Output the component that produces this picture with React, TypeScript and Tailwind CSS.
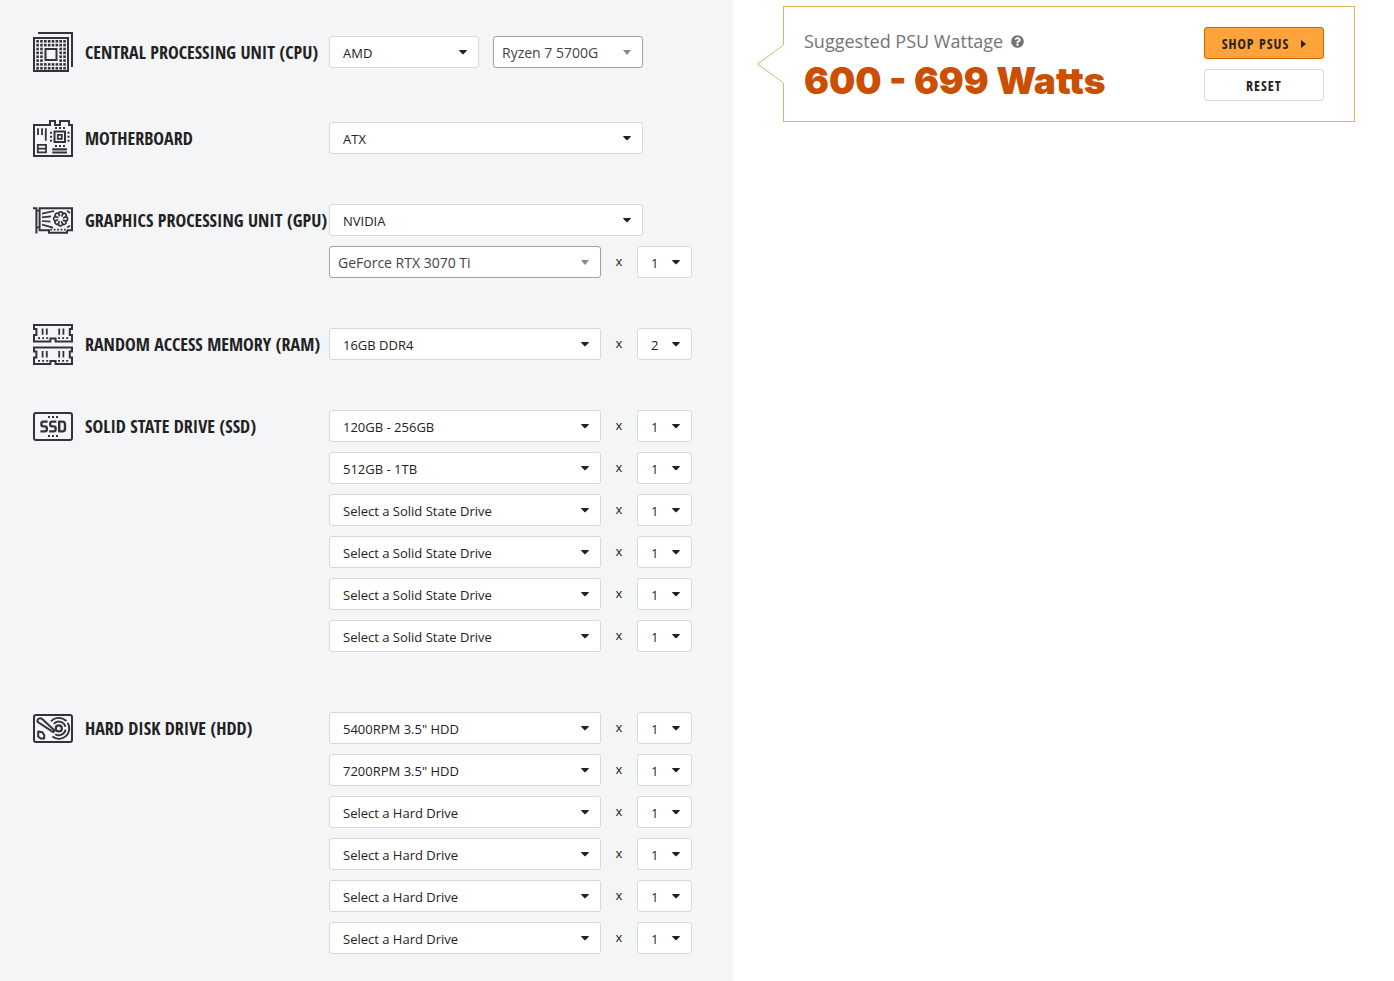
import React, { useState } from "react";
import clsx from "clsx";
import { FaQuestionCircle } from "react-icons/fa";

const GRID = [0, 1, 2, 3, 4, 5, 6, 7];

const CpuIcon = () => (
  <svg width="40" height="40" viewBox="0 0 40 40" fill="none" stroke="#333438" strokeWidth="2">
    <path d="M5 1H39V35" />
    <path d="M1 6H35V39H1Z" />
    <path d="M12.5 17H23.5V28H12.5Z" />
    <g fill="#333438" stroke="none">
      {GRID.map((row) =>
        GRID.map((col) =>
          row > 1 && row < 6 && col > 1 && col < 6 ? null : (
            <rect
              key={`${row}-${col}`}
              x={3.3 + col * 3.85}
              y={8 + row * 3.85}
              width="2.6"
              height="2.6"
            />
          )
        )
      )}
    </g>
  </svg>
);

const MotherboardIcon = () => (
  <svg width="40" height="37" viewBox="0 0 40 37" fill="none" stroke="#333438">
    <path
      strokeWidth="2"
      d="M1 36V5H17V1H22V5H27V1H36V5H39V36Z"
    />
    <path strokeWidth="1.8" d="M5 8.3V15M9 8.3V15M12.8 8.3V20.7" />
    <path strokeWidth="2" d="M21.5 11.5H32V22H21.5Z" />
    <path strokeWidth="1.8" d="M24.8 14.8H28.8V18.8H24.8Z" />
    <path
      strokeWidth="2"
      strokeDasharray="2 2"
      d="M22 8H32M22 26H32M18 11.7V22M35.5 11.7V22"
    />
    <path strokeWidth="1.8" d="M4.8 24.8H13V32.4H4.8ZM4.8 28.6H13" />
    <path strokeWidth="2" d="M19.3 29.2H34M19.3 32.4H34" />
    <path stroke="#909196" d="M19.3 30.8H34" />
  </svg>
);

const GpuIcon = () => (
  <svg width="40" height="27" viewBox="0 0 40 27" fill="none" stroke="#333438">
    <path strokeWidth="2" d="M0 1.2H3.4V26.5" />
    <path strokeWidth="1.6" d="M3.3 3.6H6M3.3 20.4H6" />
    <path strokeWidth="2" d="M34 23.2H39V1.2H6.6V23.2H16V25.8H34V23.2" />
    <path strokeWidth="1.8" strokeDasharray="1.8 1.6" d="M17.3 22.6H33" />
    <path
      strokeWidth="1.7"
      d="M9 6.6 21 4M9 10.4 18 9.3M9 14 17.5 14.6M9 17.6 20 20.6M34 3.6 37 6M34 20.6 37 18.6"
    />
    <g strokeWidth="1.7" transform="translate(27.6 11.8)">
      {GRID.map((petal) => (
        <path
          key={petal}
          transform={`rotate(${petal * 45})`}
          d="M-.4-2.6C-2.8-4.6-2-7 0-7 2-7 2.6-5.8 1.8-4.4"
        />
      ))}
    </g>
  </svg>
);

const RamStick = ({ y }: { y: number }) => (
  <g transform={`translate(0 ${y})`}>
    <path
      strokeWidth="2"
      d="M1 1H39V5H36.8V11H39V17.4H22.6V14.4H17.4V17.4H1V11H3.4V5H1Z"
    />
    <path strokeWidth="1.8" d="M9.6 4.4V10.8M13.8 4.4V10.8M26.2 4.4V10.8M30.4 4.4V10.8" />
    <path strokeWidth="1.8" strokeDasharray="2 2.1" d="M5 14.2H15.2M25 14.2H36" />
  </g>
);

const RamIcon = () => (
  <svg
    className="overflow-visible"
    width="40"
    height="40"
    viewBox="0 0 40 40"
    fill="none"
    stroke="#333438"
  >
    <RamStick y={0} />
    <RamStick y={22.6} />
  </svg>
);

const SsdIcon = () => (
  <svg width="40" height="29" viewBox="0 0 40 29" fill="none" stroke="#333438">
    <rect x="1" y="1" width="38" height="27" rx="2" strokeWidth="2" />
    <path strokeWidth="2" strokeDasharray="2 2" d="M15 5H25M15 24H25" />
    <path
      strokeWidth="2.4"
      strokeLinejoin="round"
      d="M14.6 9.6H10.2Q8.4 9.6 8.4 11.4V12.6Q8.4 14.4 10.2 14.4H12Q13.8 14.4 13.8 16.2V17.6Q13.8 19.4 12 19.4H7.4M23.4 9.6H19Q17.2 9.6 17.2 11.4V12.6Q17.2 14.4 19 14.4H20.8Q22.6 14.4 22.6 16.2V17.6Q22.6 19.4 20.8 19.4H16.2M26.2 9.6H29.4Q32 9.6 32 12.2V16.8Q32 19.4 29.4 19.4H26.2Z"
    />
  </svg>
);

const HddIcon = () => (
  <svg width="40" height="29" viewBox="0 0 40 29" fill="none" stroke="#333438">
    <rect x="1" y="1" width="38" height="27" rx="2" strokeWidth="2" />
    <path
      strokeWidth="2"
      strokeLinejoin="round"
      d="M4.8 8C3.4 5.4 6.8 3 9.2 5L21.6 16.4 20.2 18.2Z"
    />
    <path
      strokeWidth="2"
      strokeLinejoin="round"
      d="M5.2 17.4 9.2 18.2 11.2 21V24.6H7.6L5.2 22.4Z"
    />
    <circle cx="25.8" cy="14.4" r="3" strokeWidth="2.2" />
    <path
      strokeWidth="1.9"
      d="M20.8 9.8A6.8 6.8 0 0 1 32.4 12.8M32.5 15.6A6.8 6.8 0 0 1 22.2 20.2M18 7.4A10.4 10.4 0 0 1 33.4 7.2M34.6 8.8A10.4 10.4 0 0 1 19.4 22.6"
    />
  </svg>
);

interface SelectProps {
  label: string;
  value: string;
  options?: string[];
  className: string;
  searchable?: boolean;
}

const Select = ({ label, value, options = [], className, searchable }: SelectProps) => {
  const [selected, setSelected] = useState(value);

  return (
    <div className={clsx("relative h-8", className)}>
      <select
        aria-label={label}
        value={selected}
        onChange={(e) => setSelected(e.target.value)}
        className={clsx(
          "block h-8 w-full appearance-none rounded-[3px] border bg-white",
          searchable
            ? "border-[#a0a0a0] pl-2 pr-6 pt-[2px] text-sm text-[#444]"
            : "border-[#d8d8d8] pl-[13px] pr-5 pt-[3px] text-[13px] text-[#222]"
        )}
      >
        {[value, ...options].map((option) => (
          <option key={option}>{option}</option>
        ))}
      </select>
      <svg
        className={clsx(
          "pointer-events-none absolute right-3 top-[14px]",
          searchable ? "text-[#888]" : "text-[#222]"
        )}
        width="8"
        height="5"
        viewBox="0 0 8 5"
        fill="currentColor"
      >
        <path d={searchable ? "M0 0H8L4 5Z" : "M0 .6Q0 0 .6 0H7.4Q8 0 8 .6L4.4 4.2H3.6Z"} />
      </svg>
    </div>
  );
};

const Quantity = ({ label, value = "1" }: { label: string; value?: string }) => (
  <>
    <span className="w-9 text-center text-[13px] text-[#222]">x</span>
    <Select
      label={`${label} quantity`}
      value={value}
      options={["3", "4"]}
      className="w-[55px]"
    />
  </>
);

interface SectionProps {
  title: string;
  icon: React.ReactNode;
  className?: string;
  children: React.ReactNode;
}

const Section = ({ title, icon, className, children }: SectionProps) => (
  <section className={clsx("flex items-start", className)}>
    <div className="flex h-8 w-[296px] shrink-0 items-center gap-3">
      <div className="flex h-8 w-10 shrink-0 items-center [&>svg]:shrink-0">{icon}</div>
      <h2 className="whitespace-nowrap font-['Open_Sans_Condensed','Open_Sans',sans-serif] text-lg font-bold text-[#222]">
        {title}
      </h2>
    </div>
    <div className="flex flex-col gap-[10px]">{children}</div>
  </section>
);

const Drives = ({ label, values }: { label: string; values: string[] }) => (
  <>
    {values.map((value, i) => (
      <div key={i} className="flex items-center">
        <Select label={`${label} ${i + 1}`} value={value} className="w-[272px]" />
        <Quantity label={`${label} ${i + 1}`} />
      </div>
    ))}
  </>
);

const SSD = "Select a Solid State Drive";
const HDD = "Select a Hard Drive";

const Result = () => (
  <aside className="relative flex items-start justify-between border border-[#e0b067] bg-white pb-[14px] pl-5 pr-[30px] pt-5">
    <svg
      className="absolute -left-[27px] top-[37px]"
      width="28"
      height="40"
      viewBox="0 0 28 40"
      fill="none"
    >
      <path d="M26 1H28V39H26Z" fill="#fff" />
      <path d="M26.5 0V1L.6 20 26.5 39V40" fill="#fff" stroke="#e0b067" />
    </svg>
    <div>
      <p className="flex h-7 items-center gap-2 text-lg text-[#757575]">
        Suggested PSU Wattage
        <FaQuestionCircle className="text-[13px]" />
      </p>
      <p className="font-['Arial_Black','Inter',sans-serif] text-[37px] font-black leading-[52px] text-[#cc4e00]">
        600 - 699 Watts
      </p>
    </div>
    <div className="flex w-[120px] flex-col gap-[10px] font-['Open_Sans_Condensed','Open_Sans',sans-serif] text-sm font-bold tracking-[1px] text-[#222]">
      <button className="flex h-8 items-center justify-center gap-3 rounded-[3px] border border-[#cc6600] bg-[#ffa33a] pt-[2px]">
        SHOP PSUS
        <svg width="5" height="8" viewBox="0 0 5 8" fill="currentColor">
          <path d="M0 0 5 4 0 8Z" />
        </svg>
      </button>
      <button className="h-8 rounded-[3px] border border-[#d8d8d8] bg-white pt-[2px]">RESET</button>
    </div>
  </aside>
);

export default function App() {
  return (
    <div className="grid min-h-screen grid-cols-[733fr_661fr] bg-white font-['Open_Sans','Noto_Sans',sans-serif]">
      <main className="flex flex-col gap-[50px] bg-[#f4f5f7] pb-[27px] pl-[33px] pt-9">
        <Section title="CENTRAL PROCESSING UNIT (CPU)" icon={<CpuIcon />} className="pb-1">
          <div className="flex gap-[14px]">
            <Select label="CPU brand" value="AMD" options={["Intel"]} className="w-[150px]" />
            <Select label="CPU model" value="Ryzen 7 5700G" className="w-[150px]" searchable />
          </div>
        </Section>

        <Section title="MOTHERBOARD" icon={<MotherboardIcon />}>
          <Select
            label="Motherboard"
            value="ATX"
            options={["E-ATX", "Micro ATX"]}
            className="w-[314px]"
          />
        </Section>

        <Section title="GRAPHICS PROCESSING UNIT (GPU)" icon={<GpuIcon />}>
          <Select label="GPU brand" value="NVIDIA" options={["AMD"]} className="w-[314px]" />
          <div className="flex items-center">
            <Select label="GPU model" value="GeForce RTX 3070 Ti" className="w-[272px]" searchable />
            <Quantity label="GPU" />
          </div>
        </Section>

        <Section title="RANDOM ACCESS MEMORY (RAM)" icon={<RamIcon />}>
          <div className="flex items-center">
            <Select label="RAM" value="16GB DDR4" className="w-[272px]" />
            <Quantity label="RAM" value="2" />
          </div>
        </Section>

        <Section title="SOLID STATE DRIVE (SSD)" icon={<SsdIcon />} className="pb-[10px]">
          <Drives label="SSD" values={["120GB - 256GB", "512GB - 1TB", SSD, SSD, SSD, SSD]} />
        </Section>

        <Section title="HARD DISK DRIVE (HDD)" icon={<HddIcon />}>
          <Drives label="HDD" values={['5400RPM 3.5" HDD', '7200RPM 3.5" HDD', HDD, HDD, HDD, HDD]} />
        </Section>
      </main>

      <div className="pl-[50px] pr-[39px] pt-[6px]">
        <Result />
      </div>
    </div>
  );
}
